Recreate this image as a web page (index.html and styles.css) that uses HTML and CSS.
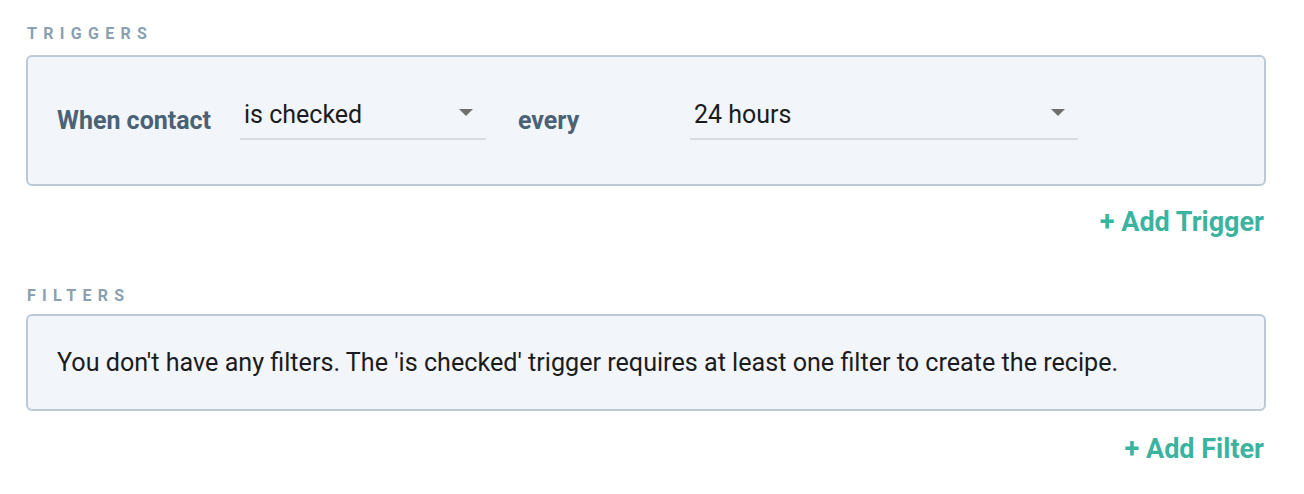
FILE: index.html
```html
<!DOCTYPE html>
<html>
<head>
<meta charset="utf-8">
<link rel="stylesheet" href="styles.css">
</head>
<body>
<div class="page">
  <div class="section-label">TRIGGERS</div>
  <div class="panel trigger-panel">
    <div class="row-label">When contact</div>
    <div class="select select-event">
      <span class="select-value">is checked</span>
      <span class="caret"></span>
    </div>
    <div class="row-label every">every</div>
    <div class="select select-interval">
      <span class="select-value">24 hours</span>
      <span class="caret"></span>
    </div>
  </div>
  <div class="add-row add-trigger"><a class="add-link">+ Add Trigger</a></div>

  <div class="section-label filters-label">FILTERS</div>
  <div class="panel filter-panel">
    <p class="empty-text">You don't have any filters. The 'is checked' trigger requires at least one filter to create the recipe.</p>
  </div>
  <div class="add-row add-filter"><a class="add-link">+ Add Filter</a></div>
</div>
</body>
</html>
```
FILE: styles.css
```css
* { box-sizing: border-box; }
html, body { margin: 0; padding: 0; background: #ffffff; }
body { font-family: Roboto, "Noto Sans", "Liberation Sans", sans-serif; }

.page {
  width: 1266px;
  padding: 24px 0 0 26px;
}

.section-label {
  font-size: 16px;
  line-height: 20px;
  font-weight: 700;
  letter-spacing: 6.3px;
  color: #8a9fb2;
  padding-left: 1px;
}

.panel {
  margin-top: 11px;
  background: #f2f5fa;
  border: 2px solid #bccad8;
  border-radius: 6px;
}

.trigger-panel {
  display: flex;
  align-items: center;
  height: 131px;
  padding: 0 29px 0 29px;
}

.row-label {
  font-size: 25px;
  line-height: 32px;
  font-weight: 700;
  color: #4a6176;
  width: 183px;
  flex: none;
}

.row-label.every {
  width: 172px;
  margin-left: 32px;
}

.select {
  position: relative;
  flex: none;
  border-bottom: 2px solid #d8dce1;
  padding: 0 0 7px 4px;
  margin-top: -3px;
}

.select-event { width: 246px; }
.select-interval { width: 388px; }

.select-value {
  display: block;
  font-size: 25px;
  line-height: 32px;
  color: #1c1c1c;
}

.caret {
  position: absolute;
  right: 13px;
  top: 10px;
  width: 0;
  height: 0;
  border-left: 7.5px solid transparent;
  border-right: 7.5px solid transparent;
  border-top: 7.5px solid #707070;
}

.add-row {
  display: flex;
  justify-content: flex-end;
  padding-right: 2px;
}

.add-trigger { margin-top: 20px; }
.add-filter { margin-top: 22px; }

.add-link {
  font-size: 27px;
  line-height: 32px;
  font-weight: 700;
  color: #3bb39f;
  cursor: pointer;
}

.filters-label { margin-top: 48px; }

.filters-label + .panel { margin-top: 8px; }

.filter-panel {
  padding: 31px 29px 30px 29px;
}

.empty-text {
  margin: 0;
  font-size: 25.15px;
  line-height: 32px;
  color: #1c1c1c;
}
```
